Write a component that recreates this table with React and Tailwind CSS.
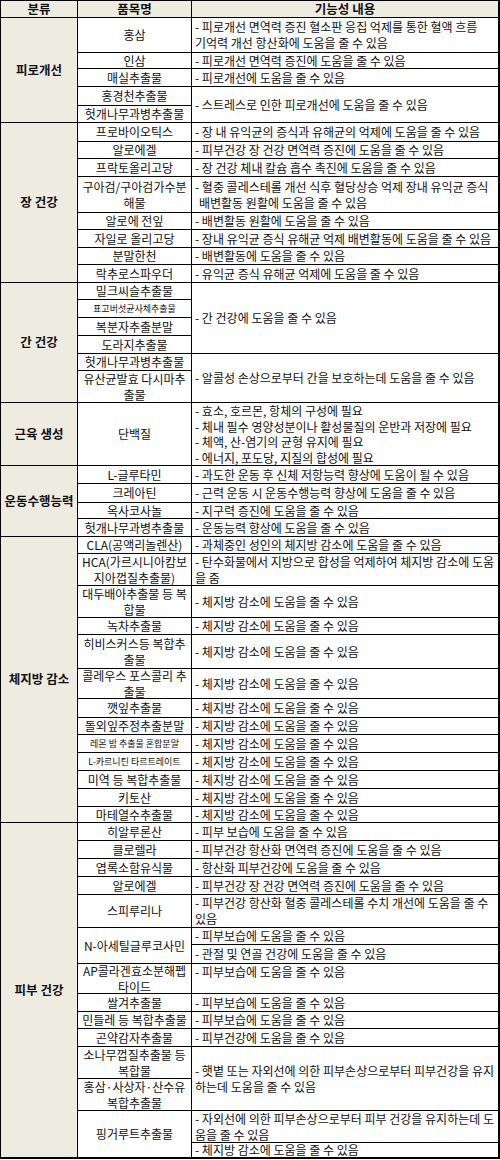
import React from "react";

const C = ({ cls = "", children }) => (
  <div className={"bg-[#eeece1] flex items-center justify-center text-center font-bold text-[12.5px] " + cls}>
    {children}
  </div>
);
const I = ({ cls = "", children }) => (
  <div className={"bg-white flex items-center justify-center text-center leading-[16px] whitespace-nowrap " + cls}>
    {children}
  </div>
);
const T = ({ cls = "", children }) => (
  <div className={"bg-white flex flex-col justify-center px-[3px] leading-[16px] whitespace-nowrap overflow-hidden " + cls}>
    {children}
  </div>
);

const FAT = "- 체지방 감소에 도움을 줄 수 있음";

export default function App() {
  return (
    <div className="w-[500px] h-[1160px] bg-white">
      <div className="w-[500px] grid grid-cols-[76px_113px_306px] grid-rows-[16px_34px_15px_17px_18px_16px_18px_16px_17px_35px_16px_17px_16px_17px_16px_17px_17px_17px_16px_31px_62px_17px_18px_15px_17px_16px_31px_31px_16px_33px_29px_18px_16px_17px_17px_17px_17px_15px_17px_17px_17px_17px_32px_16px_18px_29px_17px_16px_17px_31px_31px_31px_14px] gap-px bg-black border-black border-l border-t border-r-2 border-b-2 font-['Noto_Sans_CJK_KR','Malgun_Gothic',sans-serif] text-[12px] text-[#111]">
        {/* header */}
        <C>분류</C>
        <C>품목명</C>
        <C>기능성 내용</C>

        {/* 피로개선 */}
        <C cls="row-span-5">피로개선</C>
        <I>홍삼</I>
        <T>
          <div>- 피로개선 면역력 증진 혈소판 응집 억제를 통한 혈액 흐름</div>
          <div>기억력 개선 항산화에 도움을 줄 수 있음</div>
        </T>
        <I>인삼</I>
        <T>- 피로개선 면역력 증진에 도움을 줄 수 있음</T>
        <I>매실추출물</I>
        <T>- 피로개선에 도움을 줄 수 있음</T>
        <I>홍경천추출물</I>
        <T cls="row-span-2">- 스트레스로 인한 피로개선에 도움을 줄 수 있음</T>
        <I>헛개나무과병추출물</I>

        {/* 장 건강 */}
        <C cls="row-span-8">장 건강</C>
        <I>프로바이오틱스</I>
        <T>- 장 내 유익균의 증식과 유해균의 억제에 도움을 줄 수 있음</T>
        <I>알로에겔</I>
        <T>- 피부건강 장 건강 면역력 증진에 도움을 줄 수 있음</T>
        <I>프락토올리고당</I>
        <T>- 장 건강 체내 칼슘 흡수 촉진에 도움을 줄 수 있음</T>
        <I>
          구아검/구아검가수분
          <br />
          해물
        </I>
        <T>
          <div>- 혈중 콜레스테롤 개선 식후 혈당상승 억제 장내 유익균 증식</div>
          <div className="pl-[4px]">배변활동 원활에 도움을 줄 수 있음</div>
        </T>
        <I>알로에 전잎</I>
        <T>- 배변활동 원활에 도움을 줄 수 있음</T>
        <I>자일로 올리고당</I>
        <T>- 장내 유익균 증식 유해균 억제 배변활동에 도움을 줄 수 있음</T>
        <I>분말한천</I>
        <T>- 배변활동에 도움을 줄 수 있음</T>
        <I>락추로스파우더</I>
        <T>- 유익균 증식 유해균 억제에 도움을 줄 수 있음</T>

        {/* 간 건강 */}
        <C cls="row-span-6">간 건강</C>
        <I>밀크씨슬추출물</I>
        <T cls="row-span-4">- 간 건강에 도움을 줄 수 있음</T>
        <I cls="text-[9px]">표고버섯균사체추출물</I>
        <I>복분자추출분말</I>
        <I>도라지추출물</I>
        <I>헛개나무과병추출물</I>
        <T cls="row-span-2">- 알콜성 손상으로부터 간을 보호하는데 도움을 줄 수 있음</T>
        <I>
          유산균발효 다시마추
          <br />
          출물
        </I>

        {/* 근육 생성 */}
        <C>근육 생성</C>
        <I>단백질</I>
        <T cls="!leading-[15.5px]">
          <div>- 효소, 호르몬, 항체의 구성에 필요</div>
          <div>- 체내 필수 영양성분이나 활성물질의 운반과 저장에 필요</div>
          <div>- 체액, 산-염기의 균형 유지에 필요</div>
          <div>- 에너지, 포도당, 지질의 합성에 필요</div>
        </T>

        {/* 운동수행능력 */}
        <C cls="row-span-4">운동수행능력</C>
        <I>L-글루타민</I>
        <T>- 과도한 운동 후 신체 저항능력 향상에 도움이 될 수 있음</T>
        <I>크레아틴</I>
        <T>- 근력 운동 시 운동수행능력 향상에 도움을 줄 수 있음</T>
        <I>옥사코사놀</I>
        <T>- 지구력 증진에 도움을 줄 수 있음</T>
        <I>헛개나무과병추출물</I>
        <T>- 운동능력 향상에 도움을 줄 수 있음</T>

        {/* 체지방 감소 */}
        <C cls="row-span-13">체지방 감소</C>
        <I>CLA(공액리놀렌산)</I>
        <T>- 과체중인 성인의 체지방 감소에 도움을 줄 수 있음</T>
        <I>
          HCA(가르시니아캄보
          <br />
          지아껍질추출물)
        </I>
        <T>
          <div>- 탄수화물에서 지방으로 합성을 억제하여 체지방 감소에 도움</div>
          <div>을 줌</div>
        </T>
        <I>
          대두배아추출물 등 복
          <br />
          합물
        </I>
        <T>{FAT}</T>
        <I>녹차추출물</I>
        <T>{FAT}</T>
        <I>
          히비스커스등 복합추
          <br />
          출물
        </I>
        <T>{FAT}</T>
        <I>
          콜레우스 포스콜리 추
          <br />
          출물
        </I>
        <T>{FAT}</T>
        <I>깻잎추출물</I>
        <T>{FAT}</T>
        <I>돌외잎주정추출분말</I>
        <T>{FAT}</T>
        <I cls="text-[9px]">레몬 밤 추출물 혼합분말</I>
        <T>{FAT}</T>
        <I cls="text-[9px]">L-카르니틴 타르트레이트</I>
        <T>{FAT}</T>
        <I>미역 등 복합추출물</I>
        <T>{FAT}</T>
        <I>키토산</I>
        <T>{FAT}</T>
        <I>마테열수추출물</I>
        <T>{FAT}</T>

        {/* 피부 건강 */}
        <C cls="row-span-15">피부 건강</C>
        <I>히알루론산</I>
        <T>- 피부 보습에 도움을 줄 수 있음</T>
        <I>클로렐라</I>
        <T>- 피부건강 항산화 면역력 증진에 도움을 줄 수 있음</T>
        <I>엽록소함유식물</I>
        <T>- 항산화 피부건강에 도움을 줄 수 있음</T>
        <I>알로에겔</I>
        <T>- 피부건강 장 건강 면역력 증진에 도움을 줄 수 있음</T>
        <I>스피루리나</I>
        <T>
          <div>- 피부건강 항산화 혈중 콜레스테롤 수치 개선에 도움을 줄 수</div>
          <div>있음</div>
        </T>
        <I cls="row-span-2">N-아세틸글루코사민</I>
        <T>- 피부보습에 도움을 줄 수 있음</T>
        <T>- 관절 및 연골 건강에 도움을 줄 수 있음</T>
        <I>
          AP콜라겐효소분해펩
          <br />
          타이드
        </I>
        <T cls="!justify-start">- 피부보습에 도움을 줄 수 있음</T>
        <I>쌀겨추출물</I>
        <T>- 피부보습에 도움을 줄 수 있음</T>
        <I>민들레 등 복합추출물</I>
        <T>- 피부보습에 도움을 줄 수 있음</T>
        <I>곤약감자추출물</I>
        <T>- 피부건강에 도움을 줄 수 있음</T>
        <I>
          소나무껍질추출물 등
          <br />
          복합물
        </I>
        <T cls="row-span-2">
          <div>- 햇볕 또는 자외선에 의한 피부손상으로부터 피부건강을 유지</div>
          <div>하는데 도움을 줄 수 있음</div>
        </T>
        <I>
          홍삼·사상자·산수유
          <br />
          복합추출물
        </I>
        <I cls="row-span-2">핑거루트추출물</I>
        <T>
          <div>- 자외선에 의한 피부손상으로부터 피부 건강을 유지하는데 도</div>
          <div>움을 줄 수 있음</div>
        </T>
        <T cls="!leading-[14px] !overflow-visible">{FAT}</T>
      </div>
    </div>
  );
}
